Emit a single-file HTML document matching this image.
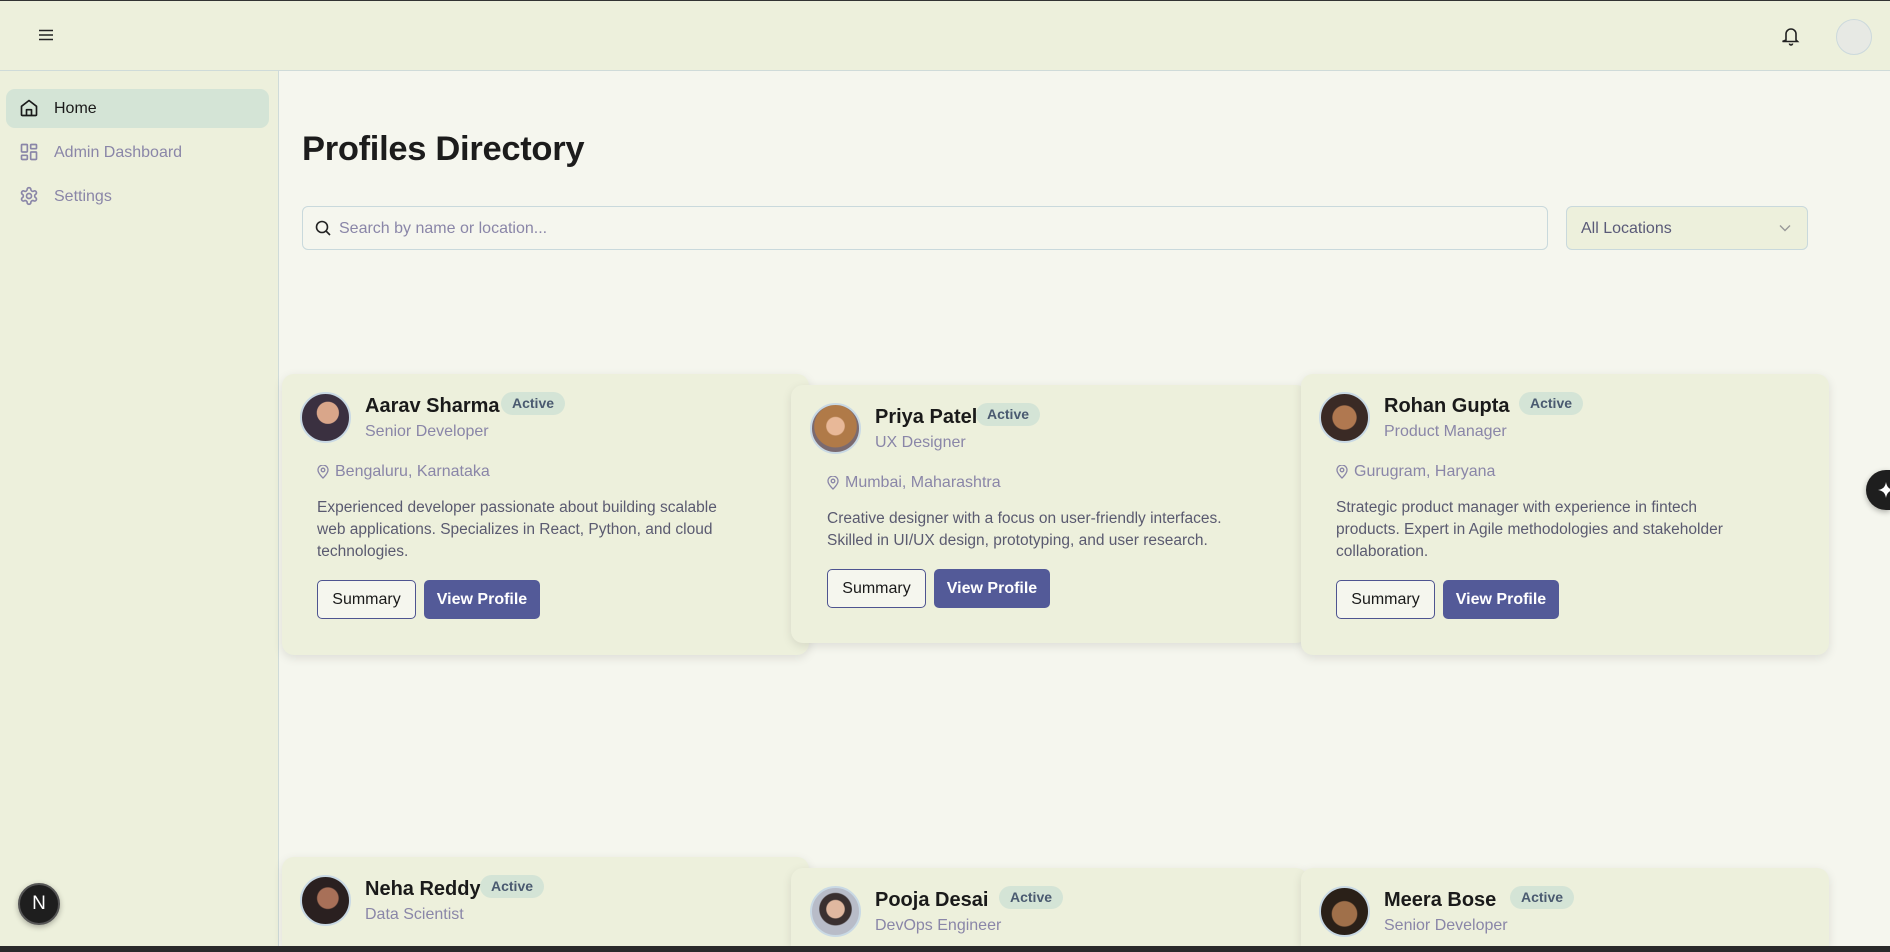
<!DOCTYPE html>
<html><head><meta charset="utf-8">
<style>
*{box-sizing:border-box;margin:0;padding:0}
html,body{width:1890px;height:952px;overflow:hidden}
body{background:#f5f6ee;font-family:"Liberation Sans",sans-serif;color:#1a1a1a}
#root{position:relative;width:1890px;height:952px;overflow:hidden;background:#f5f6ee}
.topline{position:absolute;left:0;top:0;width:1890px;height:1px;background:#333}
.header{position:absolute;left:0;top:1px;width:1890px;height:70px;background:#edf0dc;border-bottom:1px solid #cfdbd9}
.side{position:absolute;left:0;top:71px;width:279px;height:875px;background:#edf0dc;border-right:1px solid #cfdbd9}
.nav{position:absolute;left:6px;width:263px;height:39px;border-radius:9px;font-size:16px;display:flex;align-items:center;padding-left:48px;color:#8a86a8}
.nav svg{position:absolute;left:13px;top:9px}
.nav.on{background:#d4e4d6;color:#1a1a1a}
h1{position:absolute;left:302px;top:130px;font-size:34.5px;font-weight:bold;color:#1c1c1c;letter-spacing:-0.3px}
.search{position:absolute;left:302px;top:206px;width:1246px;height:44px;border:1px solid #c9d9dc;border-radius:6px;background:#f5f6ee;font-size:16px;color:#8a86a8;padding:13px 0 0 36px}
.search svg{position:absolute;left:12px;top:13px}
.sel{position:absolute;left:1566px;top:206px;width:242px;height:44px;border:1px solid #c9d9dc;border-radius:6px;background:#edf0dc;font-size:16px;color:#5a5a78;padding:13px 0 0 14px}
.sel svg{position:absolute;right:16px;top:17px}
.card{position:absolute;width:527px;height:281px;background:#edf0dc;border-radius:12px;box-shadow:0 3px 10px rgba(0,0,0,0.1)}
.card.b{border-radius:12px 12px 0 0}
.av{position:absolute;left:18px;top:18px;width:51px;height:51px;border-radius:50%;border:2px solid #c9d9e4;overflow:hidden}
.nm{position:absolute;left:83px;top:21px;font-size:20px;font-weight:600;color:#1a1a1a;white-space:nowrap}
.bd{position:absolute;top:18px;height:23px;padding:0 11px;border-radius:12px;background:#d4e4d6;color:#4a5a70;font-size:14px;font-weight:600;line-height:23px}
.rl{position:absolute;left:83px;top:49px;font-size:16px;color:#8a86a8}
.loc{position:absolute;left:35px;top:89px;font-size:16px;color:#8a86a8;padding-left:18px}
.loc svg{position:absolute;left:0;top:2px}
.ds{position:absolute;left:35px;top:123px;font-size:15.5px;line-height:22px;color:#5a5a70;white-space:nowrap}
.b1,.b2{position:absolute;top:206px;height:39px;border-radius:5px;font-size:16px;line-height:37px;text-align:center;font-weight:600}
.b1{left:35px;width:99px;border:1.5px solid #4e5490;background:#f5f6ee;color:#1a1a1a;font-weight:500}
.b2{left:142px;width:116px;background:#535a98;color:#fff;border:1px solid #535a98}
</style></head><body><div id="root">
<div class="topline"></div>
<div class="header">
<svg style="position:absolute;left:39px;top:28px" width="14" height="12" viewBox="0 0 14 12"><path d="M0 1.5H14M0 6H14M0 10.5H14" stroke="#222" stroke-width="1.6"/></svg>
<svg style="position:absolute;left:1782px;top:25px" width="18" height="20" viewBox="0 0 18 20" fill="none" stroke="#222" stroke-width="1.6"><path d="M4 14V8a5 5 0 0 1 10 0v6l1.5 1.5h-15z"/><path d="M7.5 17.5a1.5 1.5 0 0 0 3 0"/></svg>
<div style="position:absolute;left:1836px;top:18px;width:36px;height:36px;border-radius:50%;background:#e7e9e4;border:1px solid #ccd9dc"></div>
</div>
<div class="side">
<div class="nav on" style="top:18px"><svg width="20" height="20" viewBox="0 0 24 24" fill="none" stroke="#1a1a1a" stroke-width="2" stroke-linejoin="round"><path d="M3 10l9-7 9 7v10a1 1 0 0 1-1 1H4a1 1 0 0 1-1-1z"/><path d="M9 21v-7h6v7"/></svg>Home</div>
<div class="nav" style="top:62px"><svg width="20" height="20" viewBox="0 0 24 24" fill="none" stroke="#8a86a8" stroke-width="2"><rect x="3" y="3" width="7" height="9" rx="1"/><rect x="14" y="3" width="7" height="5" rx="1"/><rect x="14" y="12" width="7" height="9" rx="1"/><rect x="3" y="16" width="7" height="5" rx="1"/></svg>Admin Dashboard</div>
<div class="nav" style="top:106px"><svg width="20" height="20" viewBox="0 0 24 24" fill="none" stroke="#8a86a8" stroke-width="2"><circle cx="12" cy="12" r="3"/><path d="M12.2 2h-.4a2 2 0 0 0-2 2v.2a2 2 0 0 1-1 1.7l-.4.3a2 2 0 0 1-2 0l-.2-.1a2 2 0 0 0-2.7.7l-.2.4a2 2 0 0 0 .7 2.700l.2.1a2 2 0 0 1 1 1.7v.5a2 2 0 0 1-1 1.7l-.2.1a2 2 0 0 0-.7 2.7l.2.4a2 2 0 0 0 2.7.7l.2-.1a2 2 0 0 1 2 0l.4.3a2 2 0 0 1 1 1.7v.2a2 2 0 0 0 2 2h.4a2 2 0 0 0 2-2v-.2a2 2 0 0 1 1-1.7l.4-.3a2 2 0 0 1 2 0l.2.1a2 2 0 0 0 2.7-.7l.2-.4a2 2 0 0 0-.7-2.7l-.2-.1a2 2 0 0 1-1-1.7v-.5a2 2 0 0 1 1-1.7l.2-.1a2 2 0 0 0 .7-2.7l-.2-.4a2 2 0 0 0-2.7-.7l-.2.1a2 2 0 0 1-2 0l-.4-.3a2 2 0 0 1-1-1.7V4a2 2 0 0 0-2-2z"/></svg>Settings</div>
<div style="position:absolute;left:18px;top:812px;width:42px;height:42px;border-radius:50%;background:#1e1e1e;border:2px solid #555;color:#fff;font-size:19px;text-align:center;line-height:38px;box-shadow:0 2px 6px rgba(0,0,0,.3)">N</div>
</div>
<h1>Profiles Directory</h1>
<div class="search"><svg width="16" height="16" viewBox="0 0 16 16" fill="none" stroke="#222" stroke-width="1.6"><circle cx="7" cy="7" r="5.5"/><path d="M11 11l4 4"/></svg>Search by name or location...</div>
<div class="sel">All Locations<svg width="12" height="8" viewBox="0 0 12 8" fill="none" stroke="#999" stroke-width="1.4"><path d="M1 1.5l5 5 5-5"/></svg></div>

<div class="card" style="left:282px;top:374px">
<div class="av" style="background:radial-gradient(circle at 55% 40%,#d9a68a 0 28%,#3a3040 30% 100%)"></div>
<div class="nm">Aarav Sharma</div><div class="bd" style="left:219px">Active</div>
<div class="rl">Senior Developer</div>
<div class="loc"><svg width="12" height="14" viewBox="0 0 12 14" fill="none" stroke="#8a86a8" stroke-width="1.3"><path d="M6 13s5-4.5 5-8A5 5 0 0 0 1 5c0 3.5 5 8 5 8z"/><circle cx="6" cy="5" r="1.8"/></svg>Bengaluru, Karnataka</div>
<div class="ds">Experienced developer passionate about building scalable<br>web applications. Specializes in React, Python, and cloud<br>technologies.</div>
<div class="b1">Summary</div><div class="b2">View Profile</div>
</div>
<div class="card" style="left:791px;top:385px;width:517px;height:258px">
<div class="av" style="left:19px;top:18px;background:radial-gradient(circle at 50% 45%,#e8b898 0 25%,#b07a48 28% 60%,#7a6a70 62%)"></div>
<div class="nm" style="left:84px">Priya Patel</div><div class="bd" style="left:185px">Active</div>
<div class="rl" style="left:84px">UX Designer</div>
<div class="loc" style="left:36px"><svg width="12" height="14" viewBox="0 0 12 14" fill="none" stroke="#8a86a8" stroke-width="1.3"><path d="M6 13s5-4.5 5-8A5 5 0 0 0 1 5c0 3.5 5 8 5 8z"/><circle cx="6" cy="5" r="1.8"/></svg>Mumbai, Maharashtra</div>
<div class="ds" style="left:36px">Creative designer with a focus on user-friendly interfaces.<br>Skilled in UI/UX design, prototyping, and user research.</div>
<div class="b1" style="left:36px;top:184px">Summary</div><div class="b2" style="left:143px;top:184px">View Profile</div>
</div>
<div class="card" style="left:1301px;top:374px;width:528px">
<div class="av" style="background:radial-gradient(circle at 50% 50%,#b07850 0 35%,#3a2a25 38%)"></div>
<div class="nm">Rohan Gupta</div><div class="bd" style="left:218px">Active</div>
<div class="rl">Product Manager</div>
<div class="loc"><svg width="12" height="14" viewBox="0 0 12 14" fill="none" stroke="#8a86a8" stroke-width="1.3"><path d="M6 13s5-4.5 5-8A5 5 0 0 0 1 5c0 3.5 5 8 5 8z"/><circle cx="6" cy="5" r="1.8"/></svg>Gurugram, Haryana</div>
<div class="ds">Strategic product manager with experience in fintech<br>products. Expert in Agile methodologies and stakeholder<br>collaboration.</div>
<div class="b1">Summary</div><div class="b2">View Profile</div>
</div>

<div class="card b" style="left:282px;top:857px;height:89px">
<div class="av" style="background:radial-gradient(circle at 55% 45%,#a87058 0 28%,#2a2020 31%)"></div>
<div class="nm">Neha Reddy</div><div class="bd" style="left:198px">Active</div>
<div class="rl">Data Scientist</div>
</div>
<div class="card b" style="left:791px;top:868px;width:517px;height:78px">
<div class="av" style="left:19px;background:radial-gradient(circle at 50% 45%,#e0b8a0 0 25%,#3a3030 28% 45%,#b8bcc8 48%)"></div>
<div class="nm" style="left:84px">Pooja Desai</div><div class="bd" style="left:208px">Active</div>
<div class="rl" style="left:84px">DevOps Engineer</div>
</div>
<div class="card b" style="left:1301px;top:868px;width:528px;height:78px">
<div class="av" style="background:radial-gradient(circle at 50% 55%,#a0704a 0 35%,#2a2018 38%)"></div>
<div class="nm">Meera Bose</div><div class="bd" style="left:209px">Active</div>
<div class="rl">Senior Developer</div>
</div>

<div style="position:absolute;left:1866px;top:470px;width:24px;height:40px;border-radius:20px 0 0 20px;background:#1e1e1e;box-shadow:0 2px 6px rgba(0,0,0,.3)"><svg style="position:absolute;left:12px;top:12px" width="12" height="16" viewBox="0 0 12 16"><path d="M8 0C8.8 5 11 7.2 16 8 11 8.8 8.8 11 8 16 7.2 11 5 8.8 0 8 5 7.2 7.2 5 8 0z" fill="#fff"/></svg></div>
<div style="position:absolute;left:0;top:946px;width:1890px;height:6px;background:#2a2a2a"></div>
</div></body></html>
